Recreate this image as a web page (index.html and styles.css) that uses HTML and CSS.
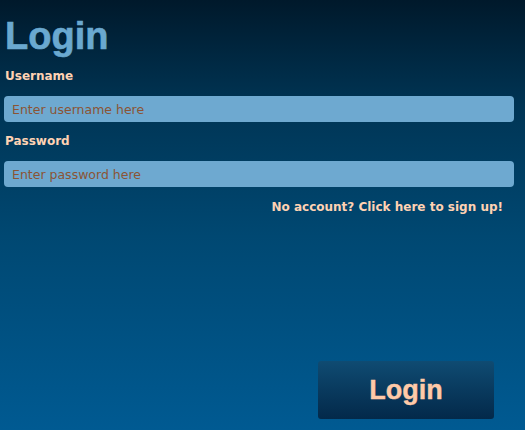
FILE: index.html
```html
<!DOCTYPE html>
<html>
<head>
<meta charset="utf-8">
<link rel="stylesheet" href="styles.css">
</head>
<body>
<div class="page">
  <h1 class="title">Login</h1>
  <form class="form">
    <label class="label" for="u">Username</label>
    <input class="field" id="u" type="text" placeholder="Enter username here">
    <label class="label" for="p">Password</label>
    <input class="field" id="p" type="password" placeholder="Enter password here">
    <div class="signup"><a href="#">No account? Click here to sign up!</a></div>
    <div class="actions"><button class="btn" type="button">Login</button></div>
  </form>
</div>
</body>
</html>
```
FILE: styles.css
```css
html, body {
  margin: 0;
  padding: 0;
  height: 100%;
}
body {
  background: linear-gradient(to bottom, #00192b 0%, #003555 25%, #004872 55%, #005a92 100%);
  font-family: "DejaVu Sans", Verdana, sans-serif;
  overflow: hidden;
}
.page {
  padding: 0 11px 0 4px;
}
.title {
  margin: 0;
  padding: 16px 0 0 1px;
  font-family: "Liberation Sans", Arial, sans-serif;
  font-weight: bold;
  font-size: 38px;
  line-height: 41px;
  color: #6aa9d0;
  -webkit-text-stroke: 0.6px #6aa9d0;
}
.form {
  display: flex;
  flex-direction: column;
}
.label {
  margin: 11px 0 0 1px;
  font-size: 12px;
  font-weight: bold;
  color: #ffd2b3;
  line-height: 16px;
}
.field {
  margin-top: 12px;
  height: 26px;
  box-sizing: border-box;
  border: none;
  border-radius: 4px;
  background: #6ea9d0;
  padding: 0 8px;
  font-family: "DejaVu Sans", Verdana, sans-serif;
  font-size: 12.5px;
  color: #8b5434;
  outline: none;
}
.field::placeholder {
  color: #8b5434;
}
.signup {
  margin-top: 9px;
  text-align: right;
  padding-right: 11px;
}
.signup a {
  color: #ffd2b3;
  font-size: 12px;
  font-weight: bold;
  text-decoration: none;
}
.actions {
  display: flex;
  justify-content: flex-end;
  margin-top: 146px;
  padding-right: 20px;
}
.btn {
  width: 176px;
  height: 58px;
  border: none;
  border-radius: 3px;
  background: linear-gradient(to bottom, #0f4b72, #03294a);
  color: #ffcaa8;
  font-family: "Liberation Sans", Arial, sans-serif;
  font-weight: bold;
  font-size: 27px;
  -webkit-text-stroke: 0.4px #ffcaa8;
}
```
